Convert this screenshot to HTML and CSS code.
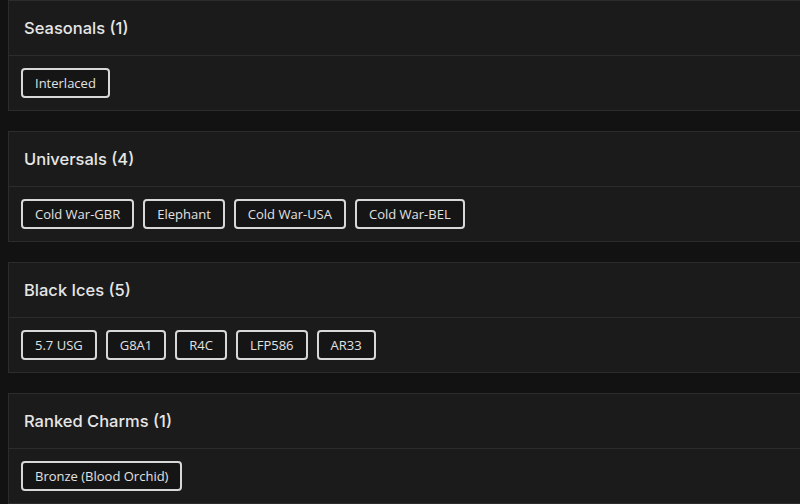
FILE: index.html
```html
<!DOCTYPE html>
<html>
<head>
<meta charset="utf-8">
<link rel="stylesheet" href="styles.css">
</head>
<body>
<div class="list">
  <section class="card">
    <header class="card-head"><h2>Seasonals (1)</h2></header>
    <div class="card-body">
      <span class="chip">Interlaced</span>
    </div>
  </section>
  <section class="card">
    <header class="card-head"><h2>Universals (4)</h2></header>
    <div class="card-body">
      <span class="chip">Cold War-GBR</span>
      <span class="chip">Elephant</span>
      <span class="chip">Cold War-USA</span>
      <span class="chip">Cold War-BEL</span>
    </div>
  </section>
  <section class="card">
    <header class="card-head"><h2>Black Ices (5)</h2></header>
    <div class="card-body">
      <span class="chip">5.7 USG</span>
      <span class="chip">G8A1</span>
      <span class="chip">R4C</span>
      <span class="chip">LFP586</span>
      <span class="chip">AR33</span>
    </div>
  </section>
  <section class="card">
    <header class="card-head"><h2>Ranked Charms (1)</h2></header>
    <div class="card-body">
      <span class="chip">Bronze (Blood Orchid)</span>
    </div>
  </section>
</div>
</body>
</html>
```
FILE: styles.css
```css
html, body {
  margin: 0;
  padding: 0;
  background: #121212;
  overflow: hidden;
}
body {
  font-family: "Open Sans", "Liberation Sans", sans-serif;
  color: #e4e4e4;
}
.list {
  display: flex;
  flex-direction: column;
  gap: 20px;
  padding-left: 8px;
  margin-right: -20px;
}
.card {
  background: #1b1b1b;
  border: 1px solid #2c2c2c;
}
.card-head {
  height: 55px;
  box-sizing: border-box;
  display: flex;
  align-items: center;
  padding: 0 0 1px 15px;
  border-bottom: 1px solid #2c2c2c;
}
.card-head h2 {
  margin: 0;
  font-family: Inter, "Open Sans", sans-serif;
  font-size: 16.5px;
  font-weight: 500;
  color: #e6e6e6;
}
.card-body {
  display: flex;
  gap: 9px;
  padding: 12px;
}
.chip {
  display: flex;
  align-items: center;
  height: 30px;
  box-sizing: border-box;
  padding: 0 12px 1px;
  border: 2px solid #d8d8d8;
  border-radius: 4px;
  background: #151515;
  font-size: 13px;
  color: #e2e2e2;
}
```
